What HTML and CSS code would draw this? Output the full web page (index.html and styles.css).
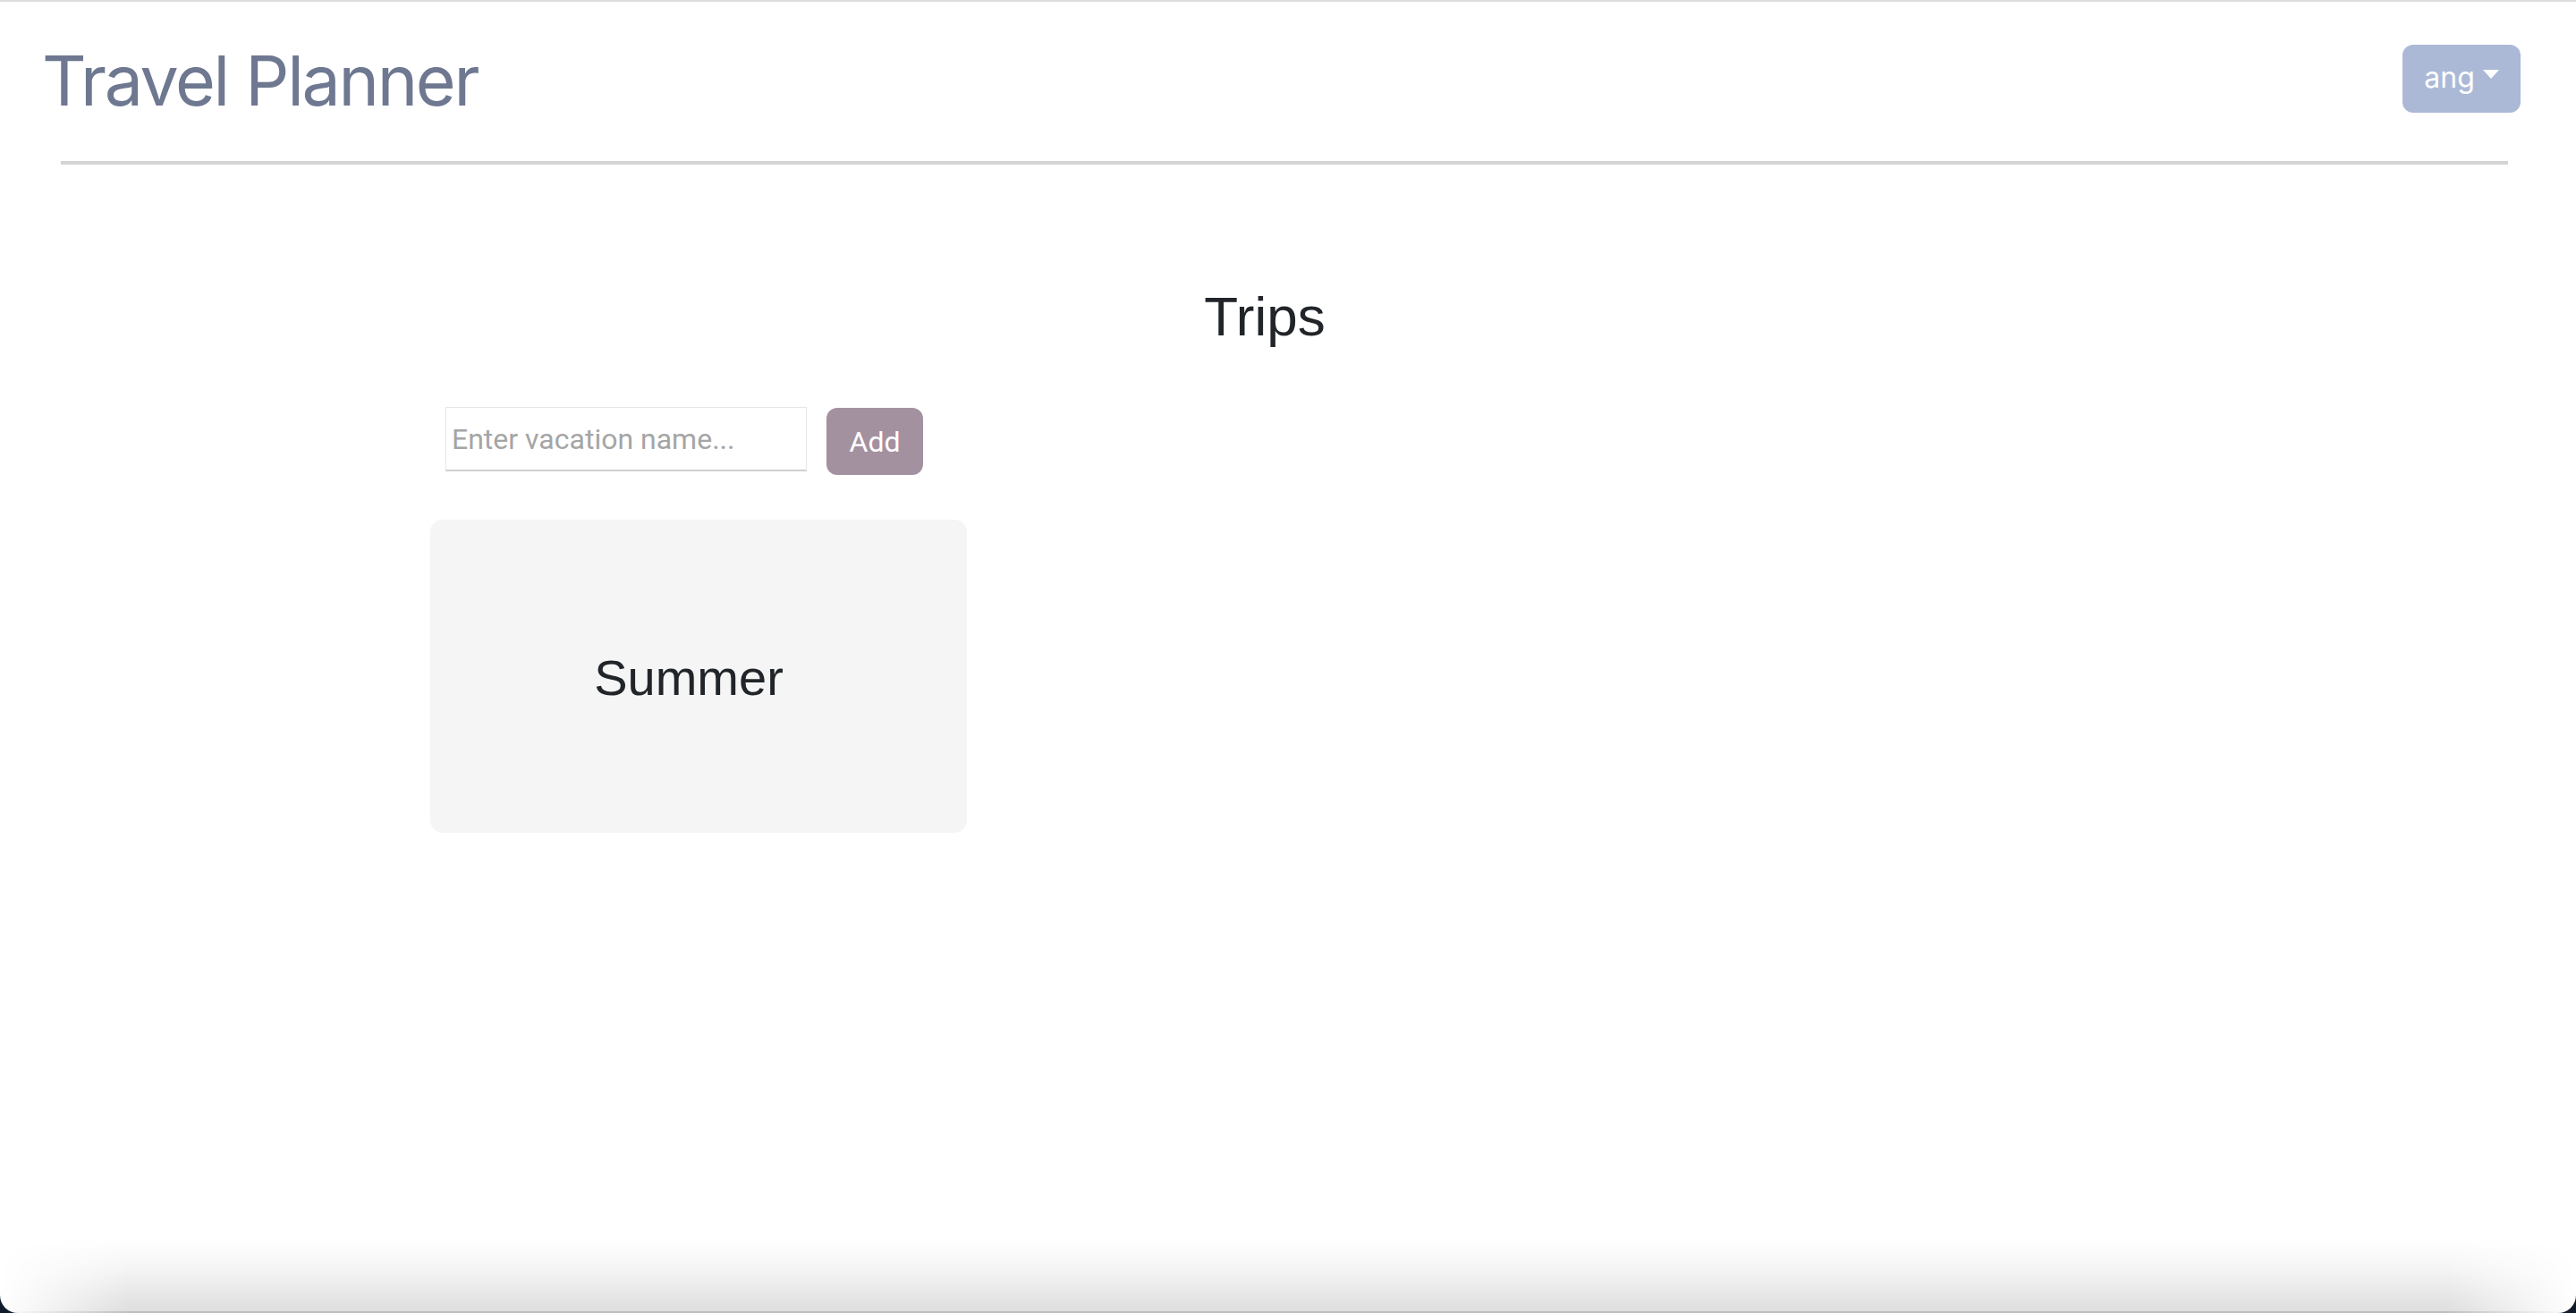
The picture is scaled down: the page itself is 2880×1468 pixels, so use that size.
FILE: index.html
```html
<!DOCTYPE html>
<html lang="en">
<head>
<meta charset="utf-8">
<title>Travel Planner</title>
<link rel="stylesheet" href="styles.css">
</head>
<body>
<div class="window">
  <header class="header">
    <h1 class="brand">Travel Planner</h1>
    <button class="user-btn" type="button">ang<span class="caret"></span></button>
  </header>
  <hr class="rule">
  <main class="content">
    <h2 class="page-title">Trips</h2>
    <form class="add-form">
      <input class="trip-input" type="text" placeholder="Enter vacation name...">
      <button class="add-btn" type="button">Add</button>
    </form>
    <div class="cards">
      <div class="trip-card">Summer</div>
    </div>
  </main>
  <div class="bottom-shade"></div>
</div>
</body>
</html>
```
FILE: styles.css
```css
html {
  margin: 0;
  background: #101b2c;
}
body {
  margin: 0;
  background: #101b2c;
}
.window {
  position: relative;
  height: 1468px;
  box-sizing: border-box;
  background: #ffffff;
  border-top: 2px solid #dcdcdc;
  border-radius: 0 0 20px 20px;
  overflow: hidden;
}
.header {
  display: flex;
  justify-content: space-between;
  align-items: flex-start;
  padding: 0 62px 0 47px;
}
.brand {
  margin: 42px 0 0 0;
  font-family: Inter, "Liberation Sans", sans-serif;
  font-weight: 400;
  font-size: 77px;
  line-height: 92px;
  color: #6e7890;
  letter-spacing: -2.3px;
}
.user-btn {
  margin-top: 48px;
  width: 132px;
  height: 76px;
  border: none;
  border-radius: 12px;
  background: #abb9d6;
  color: #ffffff;
  font-family: Inter, "Liberation Sans", sans-serif;
  font-size: 32px;
  display: flex;
  align-items: center;
  justify-content: center;
  gap: 9px;
  padding: 0 0 4px 0;
}
.caret {
  display: inline-block;
  width: 0;
  height: 0;
  border-left: 9px solid transparent;
  border-right: 9px solid transparent;
  border-top: 10px solid #ffffff;
  margin-top: -6px;
}
.rule {
  margin: 44px 76px 0 68px;
  border: none;
  height: 4px;
  background: #d4d4d4;
}
.content {
  margin-left: 481px;
  width: 1866px;
}
.page-title {
  margin: 131px 0 0 0;
  text-align: center;
  font-family: "Liberation Sans", Arial, sans-serif;
  font-weight: 400;
  font-size: 62px;
  line-height: 77px;
  color: #212529;
}
.add-form {
  display: flex;
  align-items: flex-start;
  gap: 22px;
  margin-top: 63px;
  padding-left: 17px;
}
.trip-input {
  box-sizing: border-box;
  width: 404px;
  height: 72px;
  margin: 0;
  padding: 0 6px;
  border: 1px solid #e6e6e6;
  border-bottom: 2px solid #cfcfcf;
  background: #ffffff;
  font-family: Roboto, "Liberation Sans", sans-serif;
  font-size: 32px;
  color: #333;
  outline: none;
}
.trip-input::placeholder {
  color: #a5a5a5;
}
.add-btn {
  margin-top: 1px;
  width: 108px;
  height: 75px;
  border: none;
  border-radius: 12px;
  background: #a4919f;
  color: #ffffff;
  font-family: Roboto, "Liberation Sans", sans-serif;
  font-size: 32px;
  padding: 0;
}
.cards {
  display: flex;
  margin-top: 50px;
}
.trip-card {
  box-sizing: border-box;
  width: 600px;
  height: 350px;
  border-radius: 14px;
  background: #f5f5f5;
  display: flex;
  align-items: center;
  justify-content: center;
  padding: 2px 22px 0 0;
  font-family: "Liberation Sans", Arial, sans-serif;
  font-size: 56px;
  color: #212529;
}
.bottom-shade {
  position: absolute;
  left: 0;
  right: 0;
  bottom: 0;
  height: 80px;
  background: linear-gradient(to bottom, rgba(0,0,0,0) 0%, rgba(0,0,0,0.04) 40%, rgba(0,0,0,0.13) 100%);
  -webkit-mask-image: linear-gradient(to right, transparent 0%, #000 5%, #000 95%, transparent 100%);
  mask-image: linear-gradient(to right, transparent 0%, #000 5%, #000 95%, transparent 100%);
  border-bottom: 2px solid rgba(0,0,0,0.25);
}
```
